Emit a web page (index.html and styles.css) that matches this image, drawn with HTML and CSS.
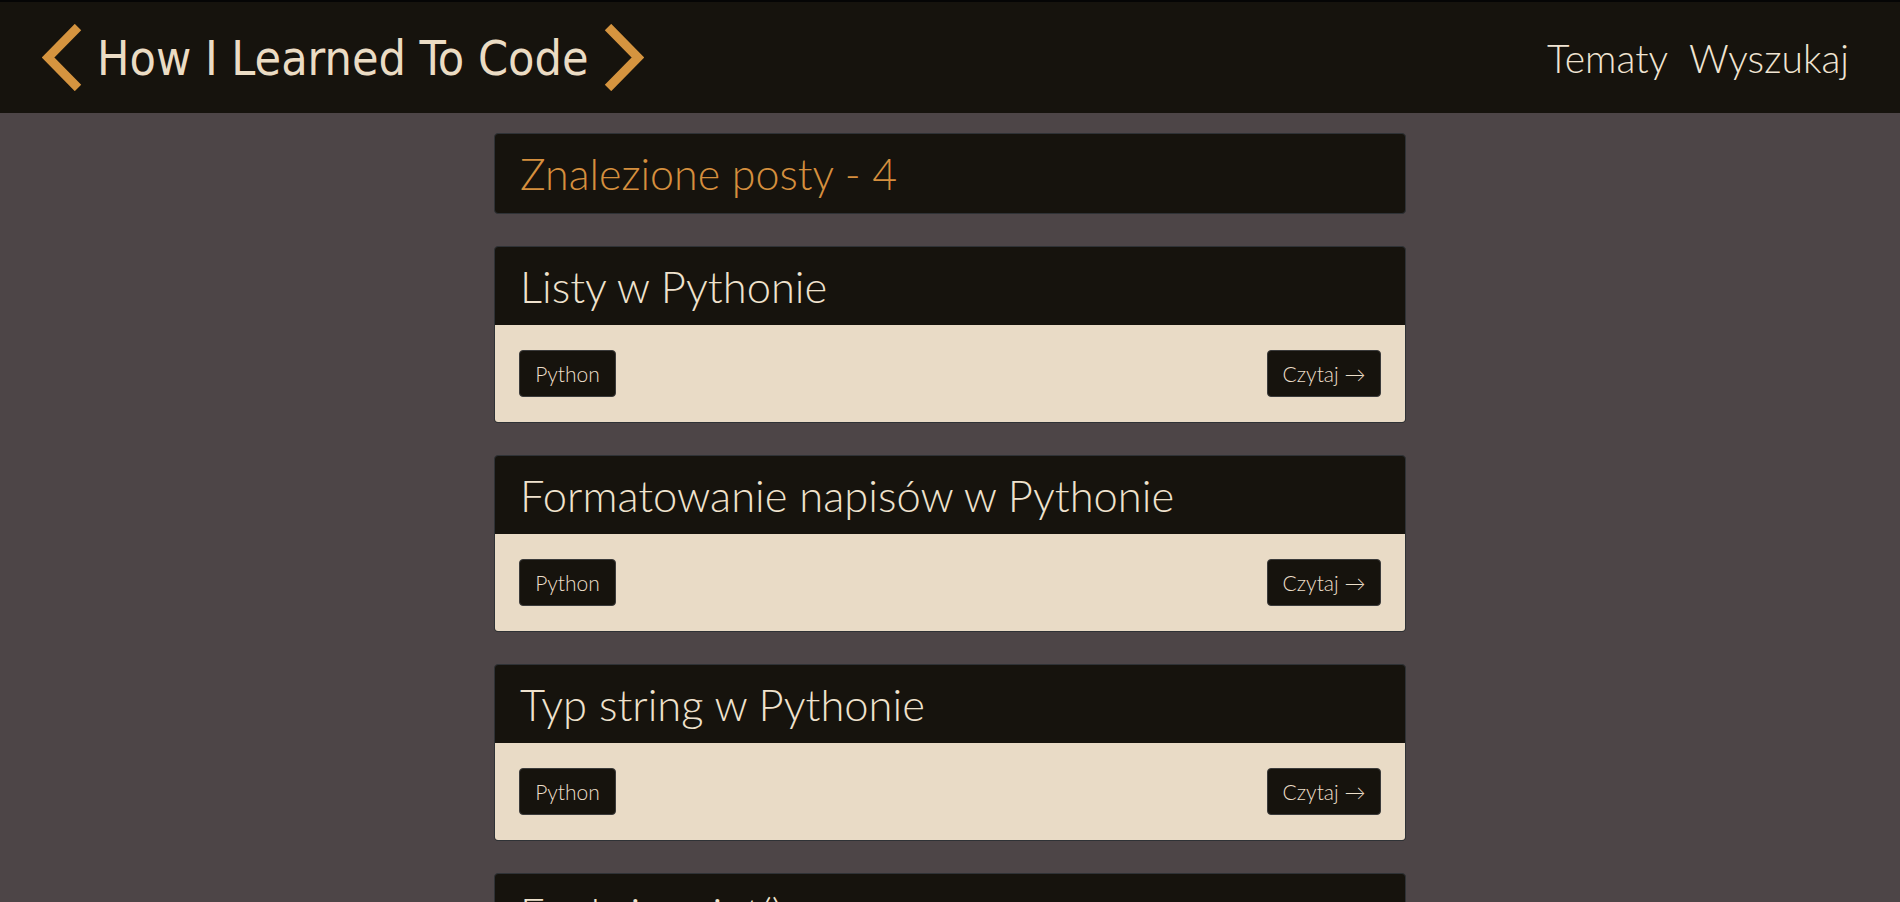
FILE: index.html
```html
<!DOCTYPE html>
<html lang="pl">
<head>
<meta charset="utf-8">
<title>How I Learned To Code</title>
<link rel="stylesheet" href="styles.css">
</head>
<body>
<header class="topbar">
  <a class="brand" href="#">
    <svg class="chev" viewBox="0 0 40 67" width="40" height="67" aria-hidden="true"><polyline points="36,3 6,33.5 36,64" fill="none" stroke="#d5943f" stroke-width="9"/></svg>
    <span class="brand-text">How I Learned To Code</span>
    <svg class="chev" viewBox="0 0 40 67" width="40" height="67" aria-hidden="true"><polyline points="4,3 34,33.5 4,64" fill="none" stroke="#d5943f" stroke-width="9"/></svg>
  </a>
  <nav class="nav">
    <a href="#">Tematy</a>
    <a href="#">Wyszukaj</a>
  </nav>
</header>
<main class="container">
  <section class="card summary"><h1>Znalezione posty - 4</h1></section>
  <article class="card post">
    <div class="post-head"><h2>Listy w Pythonie</h2></div>
    <div class="post-body"><span class="tag">Python</span><a class="read" href="#">Czytaj →</a></div>
  </article>
  <article class="card post">
    <div class="post-head"><h2>Formatowanie napisów w Pythonie</h2></div>
    <div class="post-body"><span class="tag">Python</span><a class="read" href="#">Czytaj →</a></div>
  </article>
  <article class="card post">
    <div class="post-head"><h2>Typ string w Pythonie</h2></div>
    <div class="post-body"><span class="tag">Python</span><a class="read" href="#">Czytaj →</a></div>
  </article>
  <article class="card post">
    <div class="post-head"><h2>Funkcja print()</h2></div>
    <div class="post-body"><span class="tag">Python</span><a class="read" href="#">Czytaj →</a></div>
  </article>
</main>
</body>
</html>
```

FILE: styles.css
```css
* { box-sizing: border-box; }
html, body { margin: 0; padding: 0; }
body {
  background: #4d4547;
  font-family: Lato, "Noto Sans", sans-serif;
  font-weight: 300;
  color: #ece0cc;
  min-height: 902px;
}
a { text-decoration: none; color: inherit; }

.topbar {
  height: 113px;
  background: #16130d;
  border-top: 2px solid #050505;
  display: flex;
  align-items: center;
  justify-content: space-between;
  padding: 0 51px 0 42px;
}
.brand { display: flex; align-items: center; gap: 15px; }
.chev { display: block; }
.brand-text {
  font-family: "DejaVu Sans Condensed", "DejaVu Sans", sans-serif;
  font-stretch: condensed;
  font-weight: 300;
  font-size: 48px;
  color: #ebdcc4;
}
.nav { display: flex; gap: 21px; }
.nav a { font-size: 39px; color: #f0e4d2; }

.container {
  width: 912px;
  margin: 20px auto 0;
  display: flex;
  flex-direction: column;
  gap: 32px;
}
.card {
  border: 1px solid #2f3236;
  border-radius: 4px;
  overflow: hidden;
  background: #16130d;
}
.summary {
  height: 81px;
  display: flex;
  align-items: center;
  padding: 0 25px;
}
.summary h1 {
  margin: 0;
  font-weight: 300;
  font-size: 43px;
  color: #d58f3e;
}
.post-head {
  height: 78px;
  display: flex;
  align-items: center;
  padding: 0 25px;
}
.post-head h2 {
  margin: 0;
  font-weight: 300;
  font-size: 43.5px;
  color: #efe2cd;
}
.post-body {
  background: #e9dbc6;
  padding: 25px 24px;
  display: flex;
  justify-content: space-between;
  align-items: center;
}
.tag, .read {
  display: inline-flex;
  align-items: center;
  justify-content: center;
  height: 47px;
  background: #16130d;
  border: 1px solid #3b3b3b;
  border-radius: 4px;
  font-size: 21px;
  color: #ecdfca;
}
.tag { width: 97px; }
.read { width: 114px; }
```
